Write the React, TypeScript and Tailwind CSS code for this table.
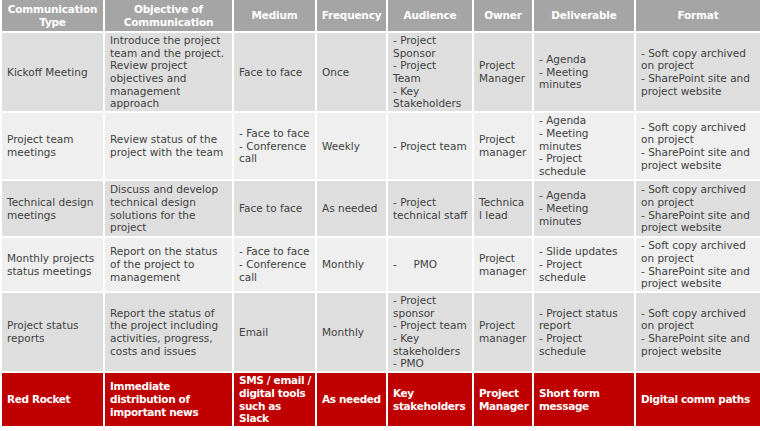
import React from "react";

const cols = [103, 129, 83, 71, 86, 60, 102, 126];

const headers = [
  ["Communication", "Type"],
  ["Objective of", "Communication"],
  ["Medium"],
  ["Frequency"],
  ["Audience"],
  ["Owner"],
  ["Deliverable"],
  ["Format"],
];

const formatLines = ["- Soft copy archived", "on project", "- SharePoint site and", "project website"];

const rows: { h: number; bg: string; cells: string[][] }[] = [
  {
    h: 80,
    bg: "bg-[#dedede]",
    cells: [
      ["Kickoff Meeting"],
      ["Introduce the project", "team and the project.", "Review project", "objectives and", "management", "approach"],
      ["Face to face"],
      ["Once"],
      ["- Project", "Sponsor", "- Project", "Team", "- Key", "Stakeholders"],
      ["Project", "Manager"],
      ["- Agenda", "- Meeting", "minutes"],
      formatLines,
    ],
  },
  {
    h: 68,
    bg: "bg-[#efefef]",
    cells: [
      ["Project team", "meetings"],
      ["Review status of the", "project with the team"],
      ["- Face to face", "- Conference", "call"],
      ["Weekly"],
      ["- Project team"],
      ["Project", "manager"],
      ["- Agenda", "- Meeting", "minutes", "- Project", "schedule"],
      formatLines,
    ],
  },
  {
    h: 57,
    bg: "bg-[#dedede]",
    cells: [
      ["Technical design", "meetings"],
      ["Discuss and develop", "technical design", "solutions for the", "project"],
      ["Face to face"],
      ["As needed"],
      ["- Project", "technical staff"],
      ["Technica", "l lead"],
      ["- Agenda", "- Meeting", "minutes"],
      formatLines,
    ],
  },
  {
    h: 55,
    bg: "bg-[#efefef]",
    cells: [
      ["Monthly projects", "status meetings"],
      ["Report on the status", "of the project to", "management"],
      ["- Face to face", "- Conference", "call"],
      ["Monthly"],
      ["-\u00a0\u00a0\u00a0\u00a0\u00a0PMO"],
      ["Project", "manager"],
      ["- Slide updates", "- Project", "schedule"],
      formatLines,
    ],
  },
  {
    h: 80,
    bg: "bg-[#dedede]",
    cells: [
      ["Project status", "reports"],
      ["Report the status of", "the project including", "activities, progress,", "costs and issues"],
      ["Email"],
      ["Monthly"],
      ["- Project", "sponsor", "- Project team", "- Key", "stakeholders", "- PMO"],
      ["Project", "manager"],
      ["- Project status", "report", "- Project", "schedule"],
      formatLines,
    ],
  },
];

const redRow = [
  ["Red Rocket"],
  ["Immediate", "distribution of", "important news"],
  ["SMS / email /", "digital tools", "such as", "Slack"],
  ["As needed"],
  ["Key", "stakeholders"],
  ["Project", "Manager"],
  ["Short form", "message"],
  ["Digital comm paths"],
];

function Lines({ lines }: { lines: string[] }) {
  return (
    <>
      {lines.map((l, i) => (
        <div key={i} className="whitespace-nowrap">
          {l}
        </div>
      ))}
    </>
  );
}

export default function App() {
  return (
    <div className="w-[760px] h-[431px] bg-white overflow-hidden font-['DejaVu_Sans',sans-serif]">
      <table className="border-collapse table-fixed w-[760px]">
        <colgroup>
          {cols.map((w, i) => (
            <col key={i} style={{ width: w }} />
          ))}
        </colgroup>
        <thead>
          <tr className="h-[32px] bg-[#a5a5a5]">
            {headers.map((h, i) => (
              <th
                key={i}
                className="border-2 border-white border-t-0 px-1 text-center align-middle text-[10.5px] leading-[12.5px] font-bold text-white tracking-[-0.2px]"
              >
                <Lines lines={h} />
              </th>
            ))}
          </tr>
        </thead>
        <tbody>
          {rows.map((r, ri) => (
            <tr key={ri} className={r.bg} style={{ height: r.h }}>
              {r.cells.map((c, ci) => (
                <td
                  key={ci}
                  className="border-2 border-white pl-[5px] pr-1 align-middle text-[10.5px] leading-[12.7px] text-[#3f3f3f]"
                >
                  <Lines lines={c} />
                </td>
              ))}
            </tr>
          ))}
          <tr className="h-[55px] bg-[#c00000]">
            {redRow.map((c, ci) => (
              <td
                key={ci}
                className="border-2 border-white pl-[5px] pr-0 align-middle text-[10.5px] leading-[12.7px] font-bold text-white tracking-[-0.35px]"
              >
                <Lines lines={c} />
              </td>
            ))}
          </tr>
        </tbody>
      </table>
    </div>
  );
}
